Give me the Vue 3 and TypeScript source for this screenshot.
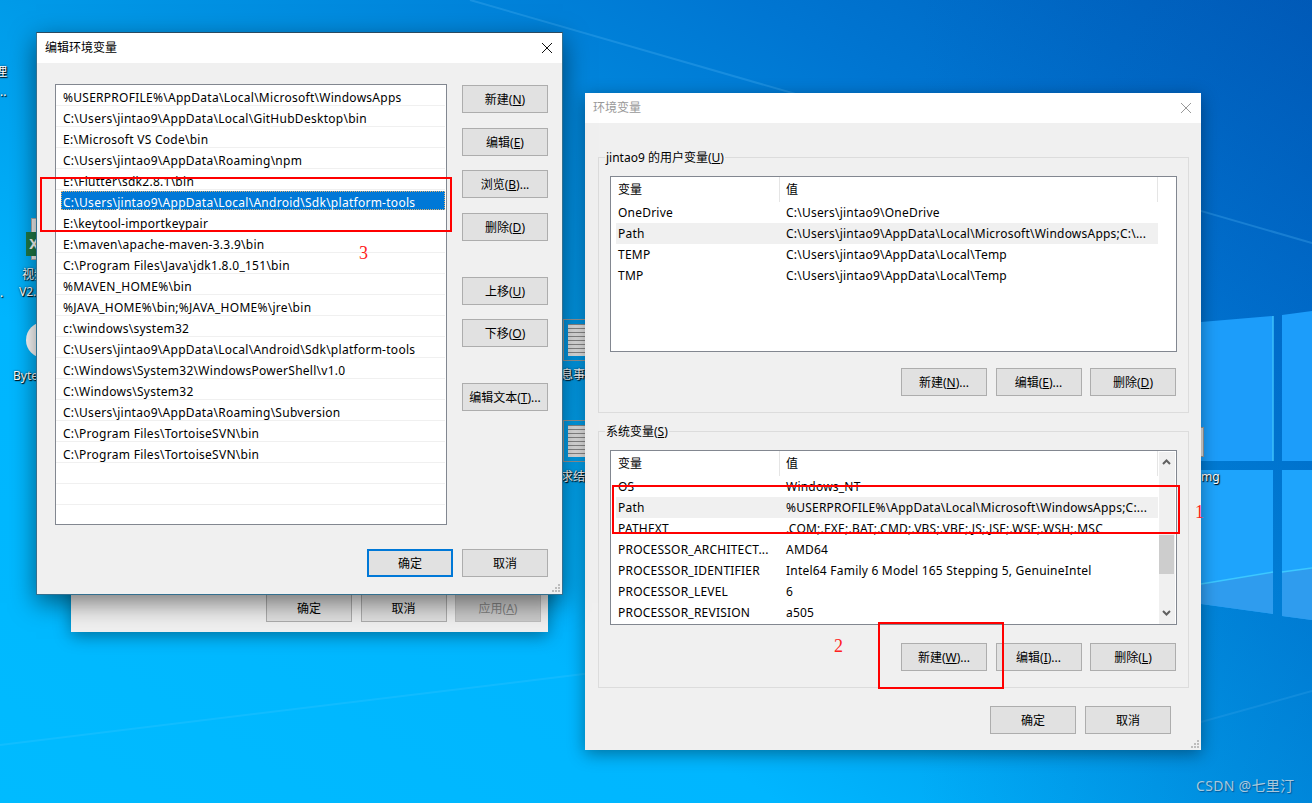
<script setup lang="ts">
interface Btn { label: string; key?: string; tail?: string }
interface EnvRow { name: string; value: string; active?: boolean }

const pathRows: string[] = [
  '%USERPROFILE%\\AppData\\Local\\Microsoft\\WindowsApps',
  'C:\\Users\\jintao9\\AppData\\Local\\GitHubDesktop\\bin',
  'E:\\Microsoft VS Code\\bin',
  'C:\\Users\\jintao9\\AppData\\Roaming\\npm',
  'E:\\Flutter\\sdk2.8.1\\bin',
  'C:\\Users\\jintao9\\AppData\\Local\\Android\\Sdk\\platform-tools',
  'E:\\keytool-importkeypair',
  'E:\\maven\\apache-maven-3.3.9\\bin',
  'C:\\Program Files\\Java\\jdk1.8.0_151\\bin',
  '%MAVEN_HOME%\\bin',
  '%JAVA_HOME%\\bin;%JAVA_HOME%\\jre\\bin',
  'c:\\windows\\system32',
  'C:\\Users\\jintao9\\AppData\\Local\\Android\\Sdk\\platform-tools',
  'C:\\Windows\\System32\\WindowsPowerShell\\v1.0',
  'C:\\Windows\\System32',
  'C:\\Users\\jintao9\\AppData\\Roaming\\Subversion',
  'C:\\Program Files\\TortoiseSVN\\bin',
  'C:\\Program Files\\TortoiseSVN\\bin',
  '',
  '',
]

const editGroups: Btn[][] = [
  [
    { label: '新建(', key: 'N', tail: ')' },
    { label: '编辑(', key: 'E', tail: ')' },
    { label: '浏览(', key: 'B', tail: ')...' },
    { label: '删除(', key: 'D', tail: ')' },
  ],
  [
    { label: '上移(', key: 'U', tail: ')' },
    { label: '下移(', key: 'O', tail: ')' },
  ],
  [{ label: '编辑文本(', key: 'T', tail: ')...' }],
]

const userRows: EnvRow[] = [
  { name: 'OneDrive', value: 'C:\\Users\\jintao9\\OneDrive' },
  { name: 'Path', value: 'C:\\Users\\jintao9\\AppData\\Local\\Microsoft\\WindowsApps;C:\\...', active: true },
  { name: 'TEMP', value: 'C:\\Users\\jintao9\\AppData\\Local\\Temp' },
  { name: 'TMP', value: 'C:\\Users\\jintao9\\AppData\\Local\\Temp' },
]

const sysRows: EnvRow[] = [
  { name: 'OS', value: 'Windows_NT' },
  { name: 'Path', value: '%USERPROFILE%\\AppData\\Local\\Microsoft\\WindowsApps;C:...', active: true },
  { name: 'PATHEXT', value: '.COM;.EXE;.BAT;.CMD;.VBS;.VBE;.JS;.JSE;.WSF;.WSH;.MSC' },
  { name: 'PROCESSOR_ARCHITECT...', value: 'AMD64' },
  { name: 'PROCESSOR_IDENTIFIER', value: 'Intel64 Family 6 Model 165 Stepping 5, GenuineIntel' },
  { name: 'PROCESSOR_LEVEL', value: '6' },
  { name: 'PROCESSOR_REVISION', value: 'a505' },
]

const userBtns: Btn[] = [
  { label: '新建(', key: 'N', tail: ')...' },
  { label: '编辑(', key: 'E', tail: ')...' },
  { label: '删除(', key: 'D', tail: ')' },
]
const sysBtns: Btn[] = [
  { label: '新建(', key: 'W', tail: ')...' },
  { label: '编辑(', key: 'I', tail: ')...' },
  { label: '删除(', key: 'L', tail: ')' },
]
const gripDots: [number, number][] = [[6, 0], [3, 3], [6, 3], [0, 6], [3, 6], [6, 6]]
</script>

<template>
  <div class="desktop">
    <svg class="wallpaper" width="1312" height="803" viewBox="0 0 1312 803">
      <line x1="0" y1="745" x2="600" y2="672" stroke="#5fd0ff" stroke-width="2" opacity="0.18" />
      <line x1="470" y1="0" x2="1312" y2="243" stroke="#4fb4f4" stroke-width="2" opacity="0.3" />
      <line x1="1201" y1="722" x2="1312" y2="691" stroke="#2f9fe8" stroke-width="2" opacity="0.35" />
      <polygon points="1201,322 1273,316 1273,461 1201,461" fill="#1c9dfa" />
      <polygon points="1282,315 1312,311 1312,461 1282,461" fill="#1c9dfa" />
      <polygon points="1201,470 1273,470 1273,614 1201,604" fill="#1ea4fc" />
      <polygon points="1282,470 1312,470 1312,620 1282,616" fill="#1ea4fc" />
      <polygon points="1201,584 1273,572 1273,614 1201,604" fill="#2f9cee" />
      <polygon points="1282,572 1312,568 1312,620 1282,616" fill="#2f9cee" />
      <line x1="1273" y1="316" x2="1273" y2="461" stroke="#3cc0fa" stroke-width="1.5" />
      <line x1="1201" y1="584" x2="1273" y2="572" stroke="#3cc8ff" stroke-width="1.5" />
      <line x1="1282" y1="572" x2="1312" y2="568" stroke="#3cc8ff" stroke-width="1.5" />
    </svg>

    <span class="dt-label lbl-li">理</span>
    <span class="dt-label lbl-dots">..</span>
    <span class="dt-label lbl-dots2">.</span>
    <div class="doc doc-excel"></div>
    <div class="excel">X</div>
    <span class="dt-label lbl-shi">视频</span>
    <span class="dt-label lbl-v2">V2.</span>
    <div class="byte-circle"></div>
    <span class="dt-label lbl-byte">Byte</span>
    <div class="doc-lines doc-a"></div>
    <span class="dt-label lbl-xi">息事</span>
    <div class="doc-lines doc-b"></div>
    <span class="dt-label lbl-qiu">求结</span>
    <div class="doc-edge"></div>
    <span class="dt-label lbl-mg">mg</span>

    <div class="window back-win">
      <div class="back-actions">
        <button class="btn">确定</button>
        <button class="btn">取消</button>
        <button class="btn disabled">应用(<u>A</u>)</button>
      </div>
    </div>

    <section class="window env-win">
      <header class="title-bar dim">
        <span>环境变量</span>
        <svg class="close" width="12" height="12" viewBox="0 0 12 12"><path d="M1 1L11 11M11 1L1 11" stroke="#999" fill="none" /></svg>
      </header>
      <div class="env-body">
        <div class="group user-group">
          <span class="group-label">jintao9 的用户变量(<u>U</u>)</span>
          <div class="table user-table">
            <div class="thead">
              <span class="th th-name">变量</span>
              <span class="th th-value">值</span>
            </div>
            <div v-for="row in userRows" :key="row.name" class="tr" :class="{ active: row.active }">
              <span class="td-name">{{ row.name }}</span>
              <span class="td-value">{{ row.value }}</span>
            </div>
          </div>
          <div class="group-actions">
            <button v-for="b in userBtns" :key="b.key" class="btn">{{ b.label }}<u>{{ b.key }}</u>{{ b.tail }}</button>
          </div>
        </div>

        <div class="group sys-group">
          <span class="group-label">系统变量(<u>S</u>)</span>
          <div class="table sys-table">
            <div class="thead">
              <span class="th th-name">变量</span>
              <span class="th th-value">值</span>
            </div>
            <div v-for="row in sysRows" :key="row.name" class="tr" :class="{ active: row.active }">
              <span class="td-name">{{ row.name }}</span>
              <span class="td-value">{{ row.value }}</span>
            </div>
            <div class="scrollbar">
              <svg width="15" height="20" viewBox="0 0 15 20"><path d="M4 12L7.500 8.500L11 12" stroke="#606060" stroke-width="2" fill="none" /></svg>
              <div class="thumb"></div>
              <svg class="arrow-down" width="15" height="20" viewBox="0 0 15 20"><path d="M4 7L7.500 10.500L11 7" stroke="#606060" stroke-width="2" fill="none" /></svg>
            </div>
          </div>
          <div class="group-actions">
            <button v-for="b in sysBtns" :key="b.key" class="btn">{{ b.label }}<u>{{ b.key }}</u>{{ b.tail }}</button>
          </div>
        </div>

        <div class="env-footer">
          <button class="btn">确定</button>
          <button class="btn">取消</button>
        </div>
      </div>
      <svg class="grip" width="8" height="8" viewBox="0 0 8 8"><rect v-for="d in gripDots" :key="d.join()" :x="d[0]" :y="d[1]" width="2" height="2" fill="#bdbdbd" /></svg>
    </section>

    <section class="window edit-win">
      <header class="title-bar">
        <span>编辑环境变量</span>
        <svg class="close" width="12" height="12" viewBox="0 0 12 12"><path d="M1 1L11 11M11 1L1 11" stroke="#111" fill="none" /></svg>
      </header>
      <div class="edit-body">
        <div class="edit-main">
          <div class="path-list">
            <div v-for="(p, i) in pathRows" :key="i" class="path-row" :class="{ selected: i === 5 }">
              <span class="path-text">{{ p }}</span>
            </div>
          </div>
          <div class="edit-side">
            <div v-for="(group, gi) in editGroups" :key="gi" class="side-group">
              <button v-for="b in group" :key="b.key" class="btn">{{ b.label }}<u>{{ b.key }}</u>{{ b.tail }}</button>
            </div>
          </div>
        </div>
        <div class="edit-footer">
          <button class="btn default">确定</button>
          <button class="btn">取消</button>
        </div>
      </div>
      <svg class="grip" width="8" height="8" viewBox="0 0 8 8"><rect v-for="d in gripDots" :key="d.join()" :x="d[0]" :y="d[1]" width="2" height="2" fill="#bdbdbd" /></svg>
    </section>

    <div class="mark mark-a"></div>
    <div class="mark mark-b"></div>
    <div class="mark mark-c"></div>
    <span class="num num-1">1</span>
    <span class="num num-2">2</span>
    <span class="num num-3">3</span>
    <span class="watermark">CSDN @七里汀</span>
  </div>
</template>

<style>
html, body { margin: 0; padding: 0; background: #00a0f0; }
</style>

<style scoped>
* { box-sizing: border-box; }
.desktop {
  position: relative;
  width: 1312px;
  height: 803px;
  overflow: hidden;
  font: 12px/16px "Noto Sans", "Noto Sans CJK SC", sans-serif;
  color: #000;
  background:
    linear-gradient(to right, rgba(0, 70, 170, 0) 70%, rgba(0, 70, 170, 0.22) 100%),
    linear-gradient(32deg, #00bbff 0%, #00b6ff 30%, #009ae8 50%, #0076d2 78%, #005fbb 100%);
}
.wallpaper { position: absolute; left: 0; top: 0; }

.dt-label {
  position: absolute;
  color: #fff;
  white-space: nowrap;
  text-shadow: 1px 1px 1px #000, 0 0 2px #003050;
}
.lbl-li { left: -5px; top: 64px; }
.lbl-dots { left: 0; top: 84px; }
.lbl-dots2 { left: 0; top: 285px; }
.lbl-shi { left: 22px; top: 267px; }
.lbl-v2 { left: 19px; top: 284px; }
.lbl-byte { left: 13px; top: 368px; }
.lbl-xi { left: 561px; top: 367px; }
.lbl-qiu { left: 561px; top: 469px; }
.lbl-mg { left: 1201px; top: 469px; }

.doc-excel {
  position: absolute;
  left: 31px;
  top: 218px;
  width: 14px;
  height: 42px;
  background: #f4f4f4;
  border: 1px solid #b0b0b0;
}
.excel {
  position: absolute;
  left: 26px;
  top: 232px;
  width: 16px;
  height: 24px;
  background: #1f7a48;
  color: #fff;
  font-weight: 700;
  font-size: 14px;
  line-height: 24px;
  text-align: center;
}
.byte-circle {
  position: absolute;
  left: 26px;
  top: 322px;
  width: 36px;
  height: 36px;
  border-radius: 50%;
  background: #fff;
}
.doc-lines {
  position: absolute;
  left: 563px;
  width: 30px;
  height: 42px;
  border: 1px solid #999;
  background: repeating-linear-gradient(#8d8d8d 0 1px, #e8e8e8 1px 4px);
  background-clip: content-box;
  padding: 4px 0 4px 4px;
  background-color: #eee;
}
.doc-a { top: 319px; }
.doc-b { top: 420px; }
.doc-edge {
  position: absolute;
  left: 1195px;
  top: 427px;
  width: 9px;
  height: 30px;
  background: #ddd;
  border: 1px solid #999;
}

.window {
  position: absolute;
  background: #f0f0f0;
  box-shadow: 0 4px 16px rgba(0, 0, 0, 0.38);
}
.back-win {
  left: 71px;
  top: 560px;
  width: 477px;
  height: 72px;
}
.back-actions {
  display: flex;
  justify-content: flex-end;
  gap: 8.5px;
  padding: 34px 7px 0 0;
}
.env-win {
  left: 585px;
  top: 93px;
  width: 616px;
  height: 657px;
}
.edit-win {
  left: 36px;
  top: 32px;
  width: 527px;
  height: 563px;
  border: 1px solid #34708f;
  border-top-color: #2a4a60;
  box-shadow: 0 8px 24px rgba(0, 0, 0, 0.5);
}

.title-bar {
  display: flex;
  align-items: center;
  justify-content: space-between;
  height: 30px;
  padding: 0 9px 0 8px;
  background: #fff;
}
.title-bar.dim { color: #999; }
.close { display: block; }

.btn {
  display: block;
  width: 86px;
  height: 28px;
  padding: 2px 0 0;
  font: inherit;
  color: #000;
  background: #e1e1e1;
  border: 1px solid #adadad;
  border-radius: 0;
  text-align: center;
}
.btn.default { border: 2px solid #0078d7; }
.btn.disabled { background: #cccccc; border-color: #bfbfbf; color: #838383; }

.edit-body { padding: 21px 14px 0 18px; }
.edit-main { display: flex; }
.path-list {
  width: 392px;
  height: 441px;
  background: #fff;
  border: 1px solid #828790;
  padding-right: 1px;
}
.path-row {
  height: 21px;
  padding: 5px 0 0 7px;
  display: flex;
  align-items: center;
  border-bottom: 1px solid #f0f0f0;
  white-space: nowrap;
  letter-spacing: 0.27px;
}
.path-row.selected {
  color: #fff;
  border-bottom-color: transparent;
  position: relative;
  z-index: 0;
}
.path-row.selected::before {
  content: "";
  position: absolute;
  z-index: -1;
  left: 5px;
  right: 0;
  top: 1px;
  bottom: 0;
  background: #0078d7;
  outline: 1px dotted #e0b070;
  outline-offset: -1px;
}
.edit-side { margin: 1px 0 0 15px; display: flex; flex-direction: column; gap: 36px; }
.side-group { display: flex; flex-direction: column; gap: 14.5px; }
.side-group:last-child { margin-top: -0.5px; }
.edit-footer {
  display: flex;
  justify-content: flex-end;
  gap: 9px;
  margin-top: 24px;
}

.env-body { padding: 34px 12px 0 13px; }
.group {
  position: relative;
  width: 591px;
  border: 1px solid #dcdcdc;
  padding: 18px 12px 0 11px;
}
.user-group { height: 256px; }
.sys-group { height: 257px; margin-top: 18px; }
.group-label {
  position: absolute;
  left: 6px;
  top: -8px;
  padding: 0 1px;
  background: #f0f0f0;
  white-space: nowrap;
}
.table {
  position: relative;
  width: 567px;
  background: #fff;
  border: 1px solid #828790;
  padding-left: 5px;
  overflow: hidden;
}
.user-table { height: 176px; }
.sys-table { height: 175px; }
.thead {
  display: flex;
  width: 542px;
  height: 25px;
  align-items: center;
  border-right: 1px solid #e5e5e5;
}
.th { display: flex; align-items: center; height: 25px; }
.th-name { width: 164px; padding-left: 2px; border-right: 1px solid #e5e5e5; }
.th-value { padding-left: 6px; }
.tr {
  display: flex;
  width: 542px;
  height: 21px;
  align-items: center;
  white-space: nowrap;
  letter-spacing: 0.22px;
}
.tr.active { background: #f0f0f0; }
.td-name { width: 164px; padding-left: 2px; flex: none; }
.td-value { padding-left: 6px; }
.group-actions {
  display: flex;
  justify-content: flex-end;
  gap: 8.5px;
  margin-top: 16px;
}
.sys-group .group-actions { margin-top: 18px; }
.scrollbar {
  position: absolute;
  right: 1px;
  top: 1px;
  bottom: 0;
  width: 16px;
  background: #f0f0f0;
}
.scrollbar svg { position: absolute; left: 0; top: 0; display: block; }
.scrollbar .arrow-down { top: auto; bottom: 0; }
.thumb {
  position: absolute;
  left: 0;
  top: 83px;
  width: 15px;
  height: 39px;
  background: #cdcdcd;
}
.env-footer {
  display: flex;
  justify-content: flex-end;
  gap: 9px;
  margin-top: 18px;
  padding-right: 18px;
}
.grip { position: absolute; right: 2px; bottom: 2px; }

.mark { position: absolute; border: 2px solid #ff0000; }
.mark-a { left: 40px; top: 177px; width: 412px; height: 55px; }
.mark-b { left: 612px; top: 485px; width: 568px; height: 49px; }
.mark-c { left: 878px; top: 622px; width: 126px; height: 67px; }

.num {
  position: absolute;
  color: #ff2020;
  font: 18px/18px "Liberation Serif", serif;
}
.num-1 { left: 1195px; top: 503px; }
.num-2 { left: 834px; top: 637px; }
.num-3 { left: 359px; top: 244px; }

.watermark {
  position: absolute;
  left: 1196px;
  top: 777px;
  font-size: 14px;
  line-height: 18px;
  letter-spacing: 0.3px;
  color: #a9c8dc;
  text-shadow: 1px 1px 1px rgba(0, 40, 90, 0.5);
  white-space: nowrap;
}
</style>
